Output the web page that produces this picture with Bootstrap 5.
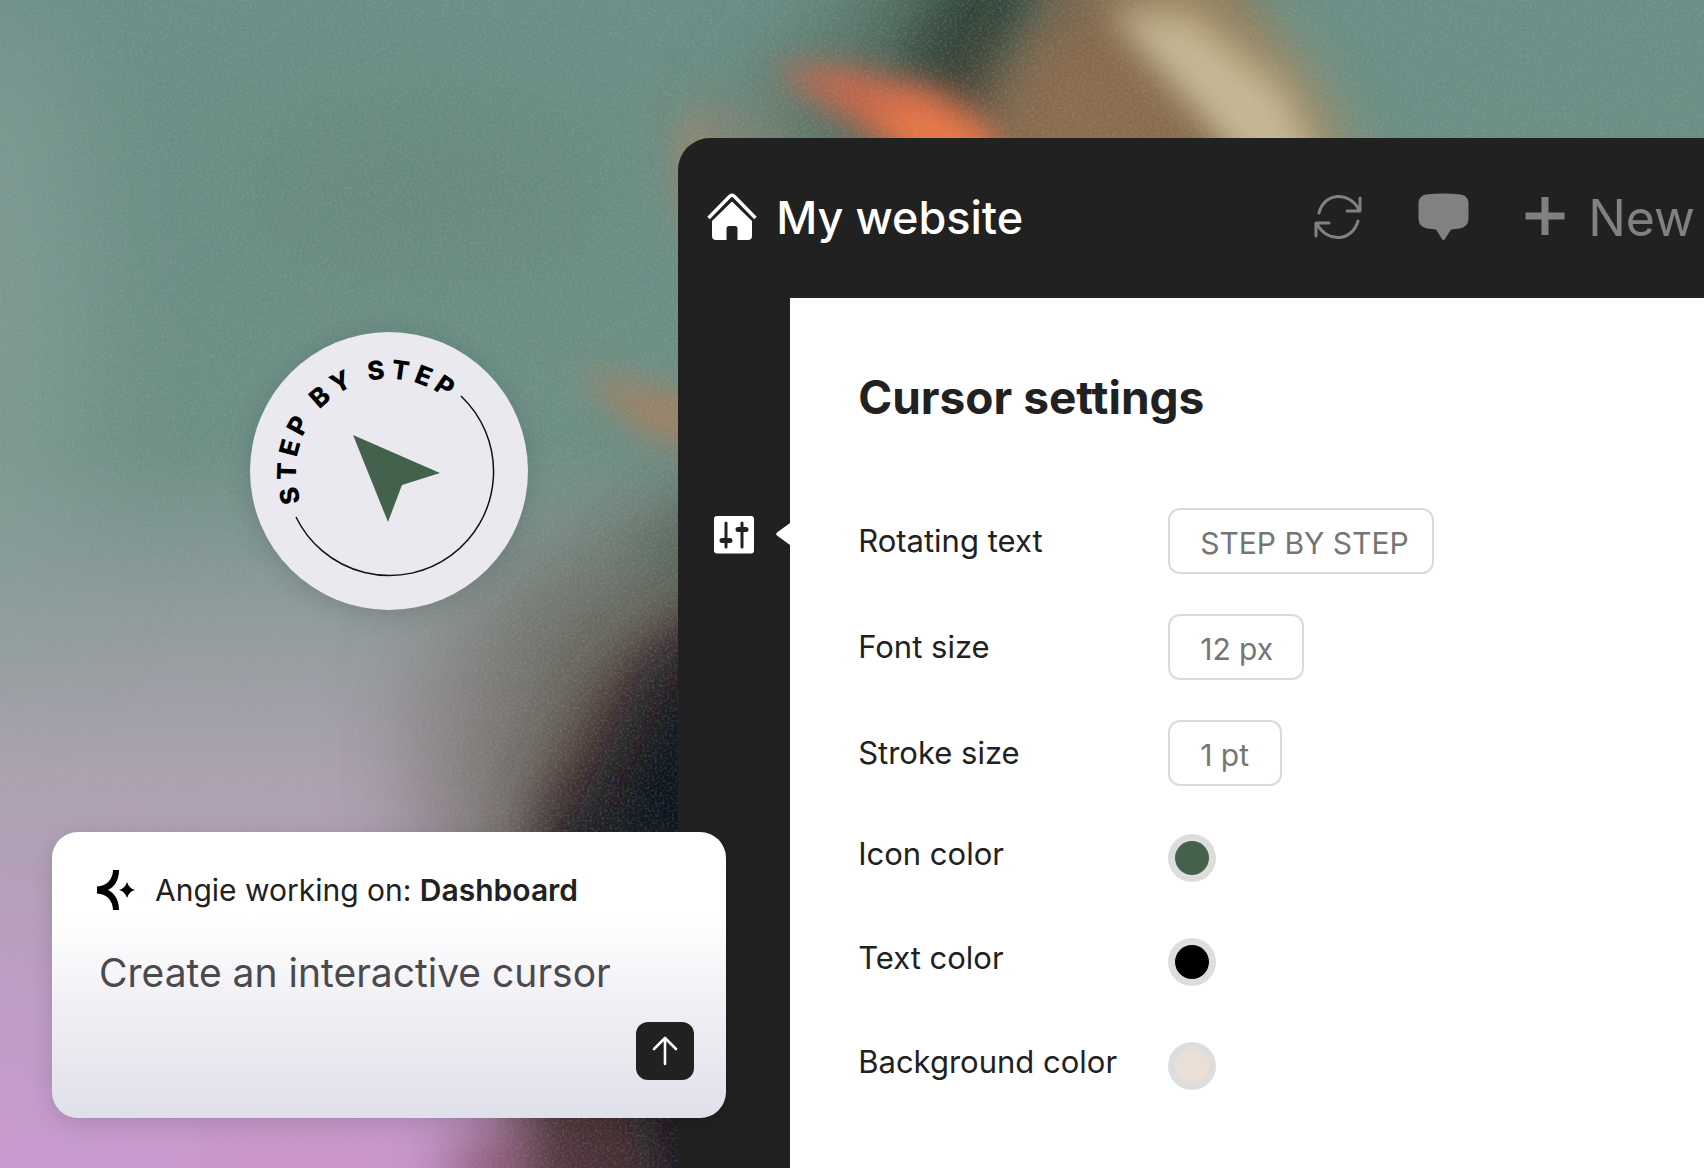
<!DOCTYPE html>
<html lang="en">
<head>
<meta charset="utf-8">
<meta name="viewport" content="width=device-width, initial-scale=1">
<title>My website – Cursor settings</title>
<link href="https://cdn.jsdelivr.net/npm/bootstrap@5.3.0/dist/css/bootstrap.min.css" rel="stylesheet">
<style>
  body { font-family: Inter, "Liberation Sans", sans-serif; color: #212121; background: #6b958b; }
  .stage { isolation: isolate; }
  .backdrop { z-index: -1; }
  .left-col { flex: 0 0 39.8%; padding-top: 332px; padding-bottom: 50px; z-index: 2; }
  .cursor-badge { width: 278px; height: 278px; margin-right: 150px; background: #eae9ef; box-shadow: 0 4px 24px rgba(20, 40, 40, .18); }
  .ring-text { font-size: 26px; font-weight: 800; letter-spacing: 5px; }

  .prompt-card { margin-left: 52px; margin-right: -48px; min-height: 286px; padding: 33px 32px 38px 45px; border-radius: 26px;
    background: linear-gradient(#fff 0%, #fff 30%, #f2f1f6 57%, #dfe0ea 100%); box-shadow: 0 6px 24px rgba(0, 0, 0, .14); }
  .prompt-title { font-size: 30px; line-height: 50px; gap: 20px; }
  .prompt-input { font-size: 39px; line-height: 56px; color: #4a4a4d; margin-top: 30px; padding: 0 0 0 2px; resize: none; height: 56px; overflow: hidden; }
  .prompt-input:focus { background: transparent; box-shadow: none; }
  .send-btn { width: 58px; height: 58px; border-radius: 12px; background: #212121; }
  .send-btn:hover { background: #3a3a3a; }

  .app-window { margin-top: 138px; background: #212121; border-top-left-radius: 32px; z-index: 1; min-width: 0; }
  .app-bar { height: 160px; padding: 0 9px 0 29px; }
  .site-link { font-size: 45px; gap: 19px; font-weight: 500; }
  .tools { color: #808182; gap: 56px; }
  .tool-btn { color: inherit; line-height: 1; }
  .new-btn { font-size: 50px; gap: 23px; }
  .side-bar { flex: 0 0 112px; padding: 218px 0 0 36px; }
  .panel { padding: 69px 48px 60px 68px; }
  .panel-caret { top: 224px; left: -14px; }
  .panel h1 { font-size: 46px; line-height: 60px; font-weight: 700; margin-bottom: 81px; }
  .setting { font-size: 31px; line-height: 42px; }
  .setting-label { flex: 0 0 310px; white-space: nowrap; }
  .text-settings { gap: 40px; margin-bottom: 48px; }
  .color-settings { gap: 56px; }
  .color-settings .setting { height: 48px; }
  .color-settings .setting-label { padding-bottom: 8px; }
  .value-box { height: 66px; font-size: 30px; color: #757575; border: 2px solid #d9dbdb; border-radius: 12px; padding: 3px 0 0 30px; }
  .box-lg { width: 266px; } .box-md { width: 136px; } .box-sm { width: 114px; }
  .swatch { width: 48px; height: 48px; padding: 7px; border: 0; border-radius: 50%; background: #dcdddc; appearance: none; }
  .swatch::-webkit-color-swatch-wrapper { padding: 0; }
  .swatch::-webkit-color-swatch { border: 0; border-radius: 50%; }
</style>
</head>
<body>
<main class="stage position-relative d-flex min-vh-100 overflow-hidden">

  <svg class="backdrop position-absolute top-0 start-0 w-100 h-100" viewBox="0 0 1704 1168" preserveAspectRatio="xMidYMid slice" aria-hidden="true">
    <defs>
      <linearGradient id="base" x1="0" y1="0" x2="0" y2="1">
        <stop offset="0" stop-color="#6a8f86"/><stop offset=".38" stop-color="#6c8f85"/>
        <stop offset=".53" stop-color="#909c9c"/><stop offset=".66" stop-color="#aca2b0"/>
        <stop offset=".85" stop-color="#bf9dc6"/><stop offset="1" stop-color="#cb9ad2"/>
      </linearGradient>
      <filter id="b14" x="-60%" y="-60%" width="220%" height="220%"><feGaussianBlur stdDeviation="16"/></filter>
      <filter id="b24" x="-60%" y="-60%" width="220%" height="220%"><feGaussianBlur stdDeviation="28"/></filter>
      <filter id="b50" x="-60%" y="-60%" width="220%" height="220%"><feGaussianBlur stdDeviation="58"/></filter>
      <filter id="grain" x="0" y="0" width="100%" height="100%">
        <feTurbulence type="fractalNoise" baseFrequency=".4" numOctaves="2" seed="4"/>
        <feColorMatrix values="0 0 0 0 .42  0 0 0 0 .42  0 0 0 0 .4  1.6 0 0 0 -.7"/>
      </filter>
    </defs>
    <rect width="1704" height="1168" fill="url(#base)"/>
    <ellipse cx="-10" cy="330" rx="90" ry="330" fill="#8aa39d" opacity=".6" filter="url(#b50)"/>
    <ellipse cx="430" cy="190" rx="190" ry="80" fill="#668779" opacity=".7" filter="url(#b50)"/>
    <!-- lower dark area -->
    <path d="M820 460 L700 510 L500 590 L440 720 L450 860 L520 1010 L560 1300 L900 1300 Z" fill="#636459" opacity=".9" filter="url(#b50)"/>
    <path d="M760 480 L690 500 L620 560 L660 590 L760 580 Z" fill="#4f6356" opacity=".7" filter="url(#b24)"/>
    <ellipse cx="470" cy="720" rx="60" ry="80" fill="#93868a" opacity=".5" filter="url(#b50)"/>
    <path d="M800 560 L710 600 L620 660 L580 720 L540 800 L520 1300 L900 1300 Z" fill="#473331" opacity=".95" filter="url(#b24)"/>
    <path d="M800 600 L720 630 L665 670 L620 760 L575 860 L640 1060 L680 1300 L900 1300 Z" fill="#07171a" filter="url(#b24)"/>
    <ellipse cx="605" cy="850" rx="50" ry="40" fill="#1d222c" opacity=".8" filter="url(#b24)"/>
    <ellipse cx="300" cy="1170" rx="120" ry="40" fill="#cf93c6" opacity=".8" filter="url(#b24)"/>
    <ellipse cx="500" cy="1170" rx="60" ry="36" fill="#85506a" opacity=".85" filter="url(#b24)"/>
    <ellipse cx="590" cy="1170" rx="50" ry="36" fill="#4a2d3a" opacity=".8" filter="url(#b24)"/>
    <!-- upper blurred figure -->
    <path d="M880 -80 L1120 -80 L1060 60 L960 190 L800 190 L750 110 L860 50 Z" fill="#4a5c4e" opacity=".85" filter="url(#b50)"/>
    <path d="M970 -60 L1070 -60 L1010 60 L960 130 L900 90 Z" fill="#263c33" opacity=".85" filter="url(#b24)"/>
    <path d="M940 60 L1010 60 L1000 150 L960 120 Z" fill="#5b3f30" opacity=".7" filter="url(#b24)"/>
    <path d="M1080 -60 L1220 -40 L1360 200 L940 220 L1000 90 Z" fill="#7d6349" filter="url(#b24)"/>
    <path d="M1030 60 L1110 30 L1230 180 L980 190 Z" fill="#93704f" opacity=".7" filter="url(#b24)"/>
    <path d="M1100 -20 L1190 -30 L1300 60 L1350 150 L1370 210 L1260 150 L1170 80 Z" fill="#b09c70" opacity=".75" filter="url(#b24)"/>
    <path d="M1110 10 L1190 20 L1280 90 L1345 210 L1270 200 L1190 100 Z" fill="#c9bb97" opacity=".95" filter="url(#b14)"/>
    <path d="M770 66 L850 68 L940 88 L990 130 L1005 190 L920 170 Z" fill="#cf6648" opacity=".95" filter="url(#b14)"/>
    <path d="M870 104 L920 104 L985 135 L1000 190 L940 180 Z" fill="#f27d42" opacity=".85" filter="url(#b14)"/>
    <path d="M670 100 L750 120 L830 150 L700 170 Z" fill="#a08065" opacity=".6" filter="url(#b24)"/>
    <ellipse cx="695" cy="180" rx="20" ry="60" fill="#a88768" opacity=".6" filter="url(#b14)"/>
    <path d="M570 370 L700 395 L720 460 L640 430 Z" fill="#a87f60" opacity=".85" filter="url(#b14)"/>
    <rect width="1704" height="1168" filter="url(#grain)" opacity=".35"/>
  </svg>

  <section class="left-col position-relative d-flex flex-column" aria-label="Cursor preview">
    <div class="cursor-badge rounded-circle ms-auto">
      <svg width="278" height="278" viewBox="-139 -139 278 278" role="img" aria-label="Step by step cursor">
        <path id="ringPath" d="M-88 31 A93 93 0 1 1 88 31" fill="none"/>
        <text class="ring-text" fill="#000"><textPath href="#ringPath">STEP BY STEP</textPath></text>
        <path d="M72 -75 A104 104 0 1 1 -93 46" fill="none" stroke="#111" stroke-width="1.5"/>
        <path d="M-36 -36 L51 2 L13 14 L-1 51 Z" fill="#44614b"/>
      </svg>
    </div>

    <form class="prompt-card d-flex flex-column mt-auto">
      <div class="prompt-title d-flex align-items-center">
        <svg width="38" height="42" viewBox="0 0 38 42" aria-hidden="true">
          <path d="M16 1 H22 C22 12 17 18 11 21 C17 24 22 30 22 41 H16 C16 32 10 25 0 24.500 V17.500 C10 17 16 10 16 1Z"/>
          <path d="M30 13 Q32 19.500 38 21 Q32 22.500 30 29 Q28 22.500 22 21 Q28 19.500 30 13Z"/>
        </svg>
        <label for="prompt">Angie working on: <span class="fw-semibold">Dashboard</span></label>
      </div>
      <textarea id="prompt" class="prompt-input form-control border-0 bg-transparent rounded-0" rows="1">Create an interactive cursor</textarea>
      <button type="button" class="send-btn btn p-0 border-0 d-flex align-items-center justify-content-center ms-auto mt-auto" aria-label="Send">
        <svg width="28" height="30" viewBox="0 0 28 30" fill="none" stroke="#fff" stroke-width="2.600" stroke-linecap="round" stroke-linejoin="round"><path d="M14 28 V2 M3 13 L14 2 L25 13"/></svg>
      </button>
    </form>
  </section>

  <section class="app-window flex-grow-1 d-flex flex-column position-relative">
    <header class="app-bar d-flex align-items-center justify-content-between">
      <a href="#" class="site-link d-flex align-items-center text-white text-decoration-none text-nowrap">
        <svg width="50" height="50" viewBox="0 0 50 50" aria-hidden="true">
          <path d="M1.500 25 L23 3 Q25 1.300 27 3 L48.500 25" fill="none" stroke="#fff" stroke-width="3.400"/>
          <path d="M25 8.500 L45 28 V43 Q45 47 41 47 H30.500 V36 Q30.500 33 28 33 H22 Q19.500 33 19.500 36 V47 H9 Q5 47 5 43 V28 Z" fill="#fff"/>
        </svg>
        <span>My website</span>
      </a>
      <div class="tools d-flex align-items-center">
        <button type="button" class="tool-btn btn p-0 border-0" aria-label="Refresh">
          <svg class="d-block" width="48" height="48" viewBox="0 0 48 48" fill="none" stroke="currentColor" stroke-width="3" stroke-linecap="round" stroke-linejoin="round">
            <path d="M5 19 C10 -2 36 -3 45 16 M46 4 V17 H33"/><path d="M44 27 C38 48 13 49 3 30 M2 42 V29 H15"/>
          </svg>
        </button>
        <button type="button" class="tool-btn btn p-0 border-0" aria-label="Comments">
          <svg class="d-block" width="51" height="50" viewBox="0 0 51 50" fill="currentColor"><path d="M8 1.500 Q25 -.5 43 1.500 Q50 2.500 50.500 10 V26 Q50 34 42 35.500 L33 36.500 L27 46 Q25.500 48 24 46 L18 36.500 L9 35.500 Q1 34 .5 26 V10 Q1 2.500 8 1.500Z"/></svg>
        </button>
        <button type="button" class="tool-btn new-btn btn p-0 border-0 d-flex align-items-center">
          <svg width="40" height="42" viewBox="0 0 40 42" aria-hidden="true"><path d="M16.500 0 H23.500 V15.500 H39.500 V22.500 H23.500 V38 H16.500 V22.500 H.5 V15.500 H16.500Z" fill="currentColor"/></svg>
          <span>New</span>
        </button>
      </div>
    </header>

    <div class="d-flex flex-grow-1">
      <nav class="side-bar" aria-label="Tools">
        <a href="#" class="d-block" aria-label="Cursor settings">
          <svg class="d-block" width="40" height="38" viewBox="0 0 40 38">
            <rect width="40" height="37.500" rx="3" fill="#fff"/>
            <path d="M12 7 V31 M28 7 V31" stroke="#212121" stroke-width="3" stroke-linecap="round"/>
            <path d="M8 24.500 H16 M24 13.500 H32" stroke="#212121" stroke-width="5" stroke-linecap="round"/>
          </svg>
        </a>
      </nav>

      <form class="panel position-relative flex-grow-1 bg-white">
        <svg class="panel-caret position-absolute" width="15" height="24" viewBox="0 0 15 24" aria-hidden="true"><path d="M15 0 V24 L14 23 L1 13.500 Q-.5 12 1 10.500 L14 1Z" fill="#fff"/></svg>
        <h1>Cursor settings</h1>
        <div class="text-settings d-flex flex-column">
          <div class="setting d-flex align-items-center">
            <label class="setting-label" for="rotating">Rotating text</label>
            <input id="rotating" type="text" class="value-box box-lg form-control" value="STEP BY STEP">
          </div>
          <div class="setting d-flex align-items-center">
            <label class="setting-label" for="fontSize">Font size</label>
            <input id="fontSize" type="text" class="value-box box-md form-control" value="12 px">
          </div>
          <div class="setting d-flex align-items-center">
            <label class="setting-label" for="strokeSize">Stroke size</label>
            <input id="strokeSize" type="text" class="value-box box-sm form-control" value="1 pt">
          </div>
        </div>
        <div class="color-settings d-flex flex-column">
          <div class="setting d-flex align-items-center">
            <label class="setting-label" for="iconColor">Icon color</label>
            <input id="iconColor" type="color" class="swatch" value="#44614b">
          </div>
          <div class="setting d-flex align-items-center">
            <label class="setting-label" for="textColor">Text color</label>
            <input id="textColor" type="color" class="swatch" value="#000000">
          </div>
          <div class="setting d-flex align-items-center">
            <label class="setting-label" for="bgColor">Background color</label>
            <input id="bgColor" type="color" class="swatch" value="#ebdfd5">
          </div>
        </div>
      </form>
    </div>
  </section>
</main>
<script src="https://cdn.jsdelivr.net/npm/bootstrap@5.3.0/dist/js/bootstrap.bundle.min.js"></script>
</body>
</html>
